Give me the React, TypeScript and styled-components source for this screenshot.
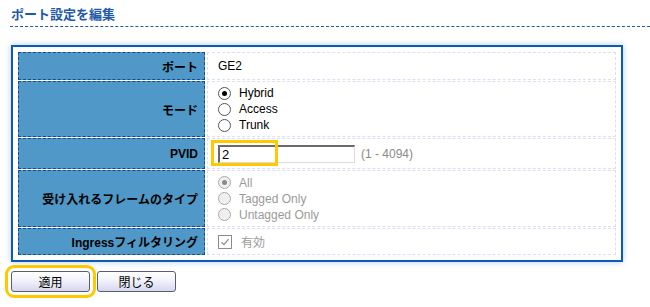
import React from "react";
import styled, { createGlobalStyle } from "styled-components";

const Global = createGlobalStyle`
  html, body { margin: 0; padding: 0; background: #fff; }
  body { font-family: "Liberation Sans", Arial, "Noto Sans CJK JP", sans-serif; font-size: 12px; color: #000; }
`;

const Page = styled.div`
  width: 650px;
  height: 307px;
  overflow: hidden;
`;

const Title = styled.h1`
  margin: 0 0 0 10px;
  padding: 7px 0 3px 1px;
  font-size: 13px;
  font-weight: bold;
  color: #1f5aa6;
  font-family: "Liberation Sans", Arial, "Noto Sans CJK JP", sans-serif;
  border-bottom: 1px dashed #1f5aa6;
  line-height: 16px;
`;

const Panel = styled.div`
  margin: 18px 0 0 11px;
  width: 607px;
  border: 2px solid #0a5cb8;
  padding: 5px;
  box-shadow: 0 0 6px rgba(40, 110, 200, 0.35);
  box-sizing: border-box;
  width: 612px;
`;

const Grid = styled.div`
  display: grid;
  grid-template-columns: 187px 1fr;
  column-gap: 2px;
  row-gap: 1px;
`;

const Label = styled.div<{ $h: number }>`
  height: ${(p) => p.$h}px;
  box-sizing: border-box;
  background: #4f98c7;
  border: 1px dashed #164c8c;
  display: flex;
  align-items: center;
  justify-content: flex-end;
  padding-right: 6px;
  font-weight: bold;
  font-size: 12px;
  color: #000;
`;

const Value = styled.div<{ $h: number }>`
  position: relative;
  height: ${(p) => p.$h}px;
  box-sizing: border-box;
  border: 1px dashed #dedef6;
  display: flex;
  flex-direction: column;
  justify-content: center;
  padding-left: 10px;
`;

const Radio = styled.label<{ $disabled?: boolean }>`
  display: flex;
  align-items: center;
  height: 16px;
  gap: 8px;
  color: ${(p) => (p.$disabled ? "#9a9a9a" : "#000")};
  font-size: 12px;
`;

const Circle = styled.span<{ $checked?: boolean; $disabled?: boolean }>`
  width: 11px;
  height: 11px;
  border-radius: 50%;
  border: 1px solid ${(p) => (p.$disabled ? "#a8a8a8" : "#555")};
  background: ${(p) => (p.$disabled ? "#f0f0f0" : "#fff")};
  display: flex;
  align-items: center;
  justify-content: center;
  box-sizing: content-box;
  &::after {
    content: "";
    display: ${(p) => (p.$checked ? "block" : "none")};
    width: 5px;
    height: 5px;
    border-radius: 50%;
    background: ${(p) => (p.$disabled ? "#8a8a8a" : "#000")};
  }
`;

const InputRow = styled.div`
  display: flex;
  align-items: center;
  gap: 6px;
`;

const TextInput = styled.div`
  width: 137px;
  height: 18px;
  box-sizing: border-box;
  border-top: 2px solid #6a6a6a;
  border-left: 2px solid #6a6a6a;
  border-right: 1px solid #dcdcdc;
  border-bottom: 1px solid #dcdcdc;
  font-size: 13px;
  line-height: 15px;
  padding-left: 2px;
  color: #000;
`;

const Hint = styled.span`
  color: #8a8a8a;
  font-size: 12px;
`;

const Highlight = styled.span`
  position: absolute;
  left: 3px;
  top: 1px;
  width: 67px;
  height: 26px;
  box-sizing: border-box;
  border: 3px solid #ffc800;
  pointer-events: none;
`;

const CheckRow = styled.div`
  display: flex;
  align-items: center;
  gap: 9px;
  color: #9a9a9a;
  font-size: 12px;
`;

const CheckBox = styled.span`
  width: 12px;
  height: 12px;
  border: 1px solid #8c8c8c;
  background: #fff;
  display: flex;
  align-items: center;
  justify-content: center;
`;

const Buttons = styled.div`
  display: flex;
  gap: 7px;
  margin: 9px 0 0 11px;
`;

const Button = styled.button<{ $focus?: boolean }>`
  width: 79px;
  height: 21px;
  border: 1px solid #5a5e6a;
  border-radius: 3px;
  background: linear-gradient(#ffffff 0%, #f2f2fb 45%, #d6d6f0 100%);
  font-family: "Liberation Sans", Arial, "Noto Sans CJK JP", sans-serif;
  font-size: 12px;
  color: #000;
  padding: 0;
  outline: ${(p) => (p.$focus ? "3px solid #ffc800" : "none")};
  outline-offset: 3px;
`;

export default function App() {
  return (
    <Page>
      <Global />
      <Title>ポート設定を編集</Title>
      <Panel>
        <Grid>
          <Label $h={28}>ポート</Label>
          <Value $h={28}>GE2</Value>

          <Label $h={56}>モード</Label>
          <Value $h={56}>
            <Radio><Circle $checked />Hybrid</Radio>
            <Radio><Circle />Access</Radio>
            <Radio><Circle />Trunk</Radio>
          </Value>

          <Label $h={31}>PVID</Label>
          <Value $h={31}>
            <InputRow>
              <TextInput>2</TextInput>
              <Hint>(1 - 4094)</Hint>
            </InputRow>
            <Highlight />
          </Value>

          <Label $h={57}>受け入れるフレームのタイプ</Label>
          <Value $h={57}>
            <Radio $disabled><Circle $checked $disabled />All</Radio>
            <Radio $disabled><Circle $disabled />Tagged Only</Radio>
            <Radio $disabled><Circle $disabled />Untagged Only</Radio>
          </Value>

          <Label $h={27}>Ingressフィルタリング</Label>
          <Value $h={27}>
            <CheckRow>
              <CheckBox>
                <svg width="10" height="10" viewBox="0 0 10 10">
                  <path d="M1.5 5.2 L4 7.6 L8.6 2.2" fill="none" stroke="#8c8c8c" strokeWidth="1.3" />
                </svg>
              </CheckBox>
              有効
            </CheckRow>
          </Value>
        </Grid>
      </Panel>
      <Buttons>
        <Button $focus>適用</Button>
        <Button>閉じる</Button>
      </Buttons>
    </Page>
  );
}
